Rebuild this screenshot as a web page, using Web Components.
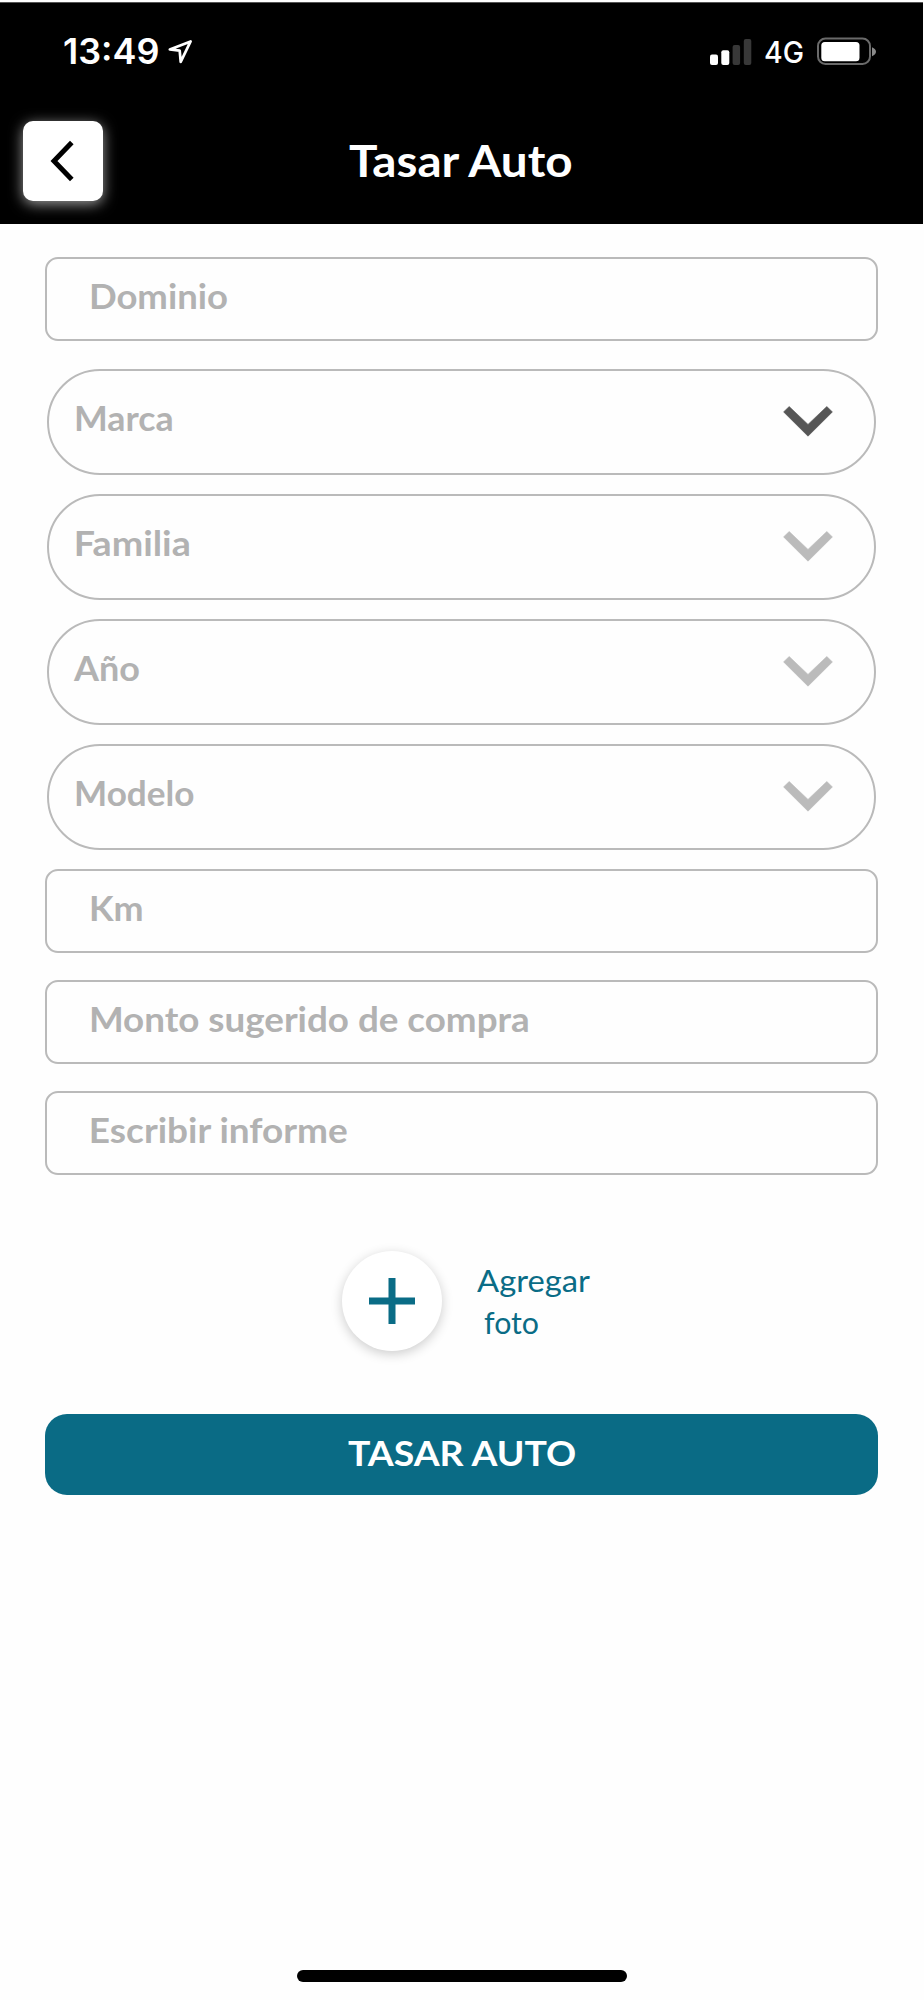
<!DOCTYPE html>
<html lang="es">
<head>
<meta charset="utf-8">
<title>Tasar Auto</title>
<style>
html,body{margin:0;background:#fefefe}
body{width:924px;height:2000px;overflow:hidden;font-family:Lato,"Open Sans",sans-serif}
</style>
</head>
<body>
<valuation-screen></valuation-screen>
<script>
const define = (name, html, setup) => customElements.define(name, class extends HTMLElement {
  connectedCallback() {
    if (this.shadowRoot) return;
    const t = document.createElement('template');
    t.innerHTML = html;
    this.attachShadow({mode: 'open'}).append(t.content.cloneNode(true));
    if (setup) setup(this, this.shadowRoot);
  }
});

/* One line of text, widened so that its glyphs span `span` pixels. */
const pen = document.createElement('canvas').getContext('2d');
define('fitted-text', `<style>
  :host{display:block;white-space:pre;flex:none;transform-origin:0 0}
</style><slot></slot>`, el => {
  const cs = getComputedStyle(el), text = el.textContent;
  const span = Number(el.getAttribute('span'));
  pen.font = `${cs.fontWeight} ${cs.fontSize} ${cs.fontFamily}`;
  const m = pen.measureText(text);
  const ink = m.actualBoundingBoxLeft + m.actualBoundingBoxRight;
  el.style.transform = `scaleX(${span / ink})`;
  el.style.textIndent = m.actualBoundingBoxLeft + 'px';
  el.style.width = span + 'px';
});

define('status-bar', `<style>
  :host{display:flex;height:78px;color:#fff;font-family:Inter,sans-serif;align-items:flex-start}
  .time{font-size:35px;font-weight:600;line-height:42px;margin:27px 10px 0 63.5px}
  .net{font-size:29.5px;font-weight:500;line-height:36px;margin:31px 14px 0 12.5px}
  svg{display:block;flex:none}
  .arrow{margin-top:34px}
  .bars{margin:34px 0 0 auto}
  .bat{margin:32px 46.5px 0 0}
</style>
<fitted-text class="time" span="94">13:49</fitted-text>
<svg class="arrow" width="28" height="28" viewBox="0 0 28 28"><path d="M1.8 12.4 22.6 4.4 12.7 24.8 11.7 13.7Z" fill="none" stroke="#fff" stroke-width="2.7" stroke-linejoin="round"/></svg>
<svg class="bars" width="42" height="30" viewBox="0 0 42 30"><g fill="#fff"><rect x="0" y="17.5" width="8" height="10.5" rx="2"/><rect x="11.3" y="13.3" width="8" height="14.7" rx="2"/></g><g fill="#383838"><rect x="22.6" y="8" width="7.5" height="20" rx="2"/><rect x="33.8" y="2" width="7.5" height="26" rx="2"/></g></svg>
<fitted-text class="net" span="38">4G</fitted-text>
<svg class="bat" width="60" height="32" viewBox="0 0 60 32"><rect x="1" y="3.5" width="52" height="25.5" rx="7.5" fill="none" stroke="#6a6a6a" stroke-width="2"/><rect x="4.3" y="7" width="38.2" height="19.2" rx="3.5" fill="#fff"/><path d="M55 12.2Q59 13.8 59 16.7T55 21.2Z" fill="#8a8a8a"/></svg>`);

define('back-button', `<style>
  :host{display:block;width:80px;height:80px;border-radius:10px;background:#fff;box-shadow:0 3px 14px rgba(255,255,255,.62)}
  svg{display:block}
</style><svg width="80" height="80" viewBox="0 0 80 80"><path d="M48.8 21.5 31 40 48.8 58.5" fill="none" stroke="#000" stroke-width="5"/></svg>`);

define('app-header', `<style>
  :host{display:block;margin-top:2px;width:923px;height:221.5px;background:#000;color:#fff;box-sizing:border-box;border-top:1px solid #555}
  .bar{display:grid;grid-template-columns:81px 1fr;padding:40px 0 0 22.5px}
  .title{font-size:43.5px;font-weight:700;line-height:52px;margin:13px 0 0 245.5px}
</style><status-bar></status-bar>
<div class="bar"><back-button></back-button><fitted-text class="title" span="225">Tasar Auto</fitted-text></div>`);

define('text-field', `<style>
  :host{display:block;box-sizing:border-box;height:84px;margin-left:45px;width:833px;border:2px solid #bababa;border-radius:13px;color:#b2b2b2;font-size:34.7px;font-weight:700;line-height:42px;padding:16px 0 0 43.5px}
</style><slot></slot>`);

define('select-field', `<style>
  :host{display:flex;justify-content:space-between;box-sizing:border-box;height:106px;margin-left:47px;width:829px;border:2px solid #bababa;border-radius:53px;color:#b2b2b2;font-size:34.7px;font-weight:700;line-height:42px;padding:26px 41px 0 26.5px;--mark:#bbb}
  :host([active]){--mark:#565656}
  svg{display:block;margin-top:8.7px}
  path{fill:var(--mark);stroke:var(--mark);stroke-width:.6}
</style><slot></slot><svg width="50" height="31" viewBox="0 0 50 31"><path d="M.6 5.9 6.2.5 25 18.4 43.8.5 49.4 5.9 25 30.2Z"/></svg>`);

define('photo-adder', `<style>
  :host{display:flex;margin:75.5px 0 0 342px;height:101px;color:#0a6c86}
  .disc{width:100px;height:100px;border-radius:50%;background:#fff;box-shadow:0 3px 12px rgba(0,0,0,.2);display:grid;place-items:center}
  svg{display:block}
  .text{margin:8px 0 0 34.5px;font-size:30px;line-height:42.3px}
  .second{margin-left:7px}
</style><div class="disc"><svg width="46" height="46" viewBox="0 0 46 46"><path d="M23 0V46M0 23H46" stroke="#0a6c86" stroke-width="7"/></svg></div>
<div class="text"><fitted-text span="113">Agregar</fitted-text><fitted-text class="second" span="54">foto</fitted-text></div>`);

define('submit-button', `<style>
  :host{display:flex;justify-content:center;box-sizing:border-box;margin:62px 0 0 45px;width:833px;height:81px;border-radius:22px;background:#0a6b85;color:#fff;font-size:35px;font-weight:700;line-height:42px;padding-top:17.5px}
</style><slot></slot>`);

define('home-indicator', `<style>
  :host{display:block;width:330px;height:12px;border-radius:6px;background:#000;margin:auto 0 18px 297px}
</style>`);

define('valuation-screen', `<style>
  :host{display:flex;flex-direction:column;height:2000px;overflow:hidden}
  form{display:flex;flex-direction:column;padding-top:33.7px}
  .pills{display:flex;flex-direction:column;gap:19px;margin:28px 0 18.6px}
  .inputs{display:flex;flex-direction:column;gap:27.3px}
  .pills fitted-text[span="66"]{margin-left:-2.5px}
</style>
<app-header></app-header>
<form>
  <text-field><fitted-text span="136">Dominio</fitted-text></text-field>
  <div class="pills">
    <select-field active><fitted-text span="96">Marca</fitted-text></select-field>
    <select-field><fitted-text span="113">Familia</fitted-text></select-field>
    <select-field><fitted-text span="66">Año</fitted-text></select-field>
    <select-field><fitted-text span="117.5">Modelo</fitted-text></select-field>
  </div>
  <div class="inputs">
    <text-field><fitted-text span="51.5">Km</fitted-text></text-field>
    <text-field><fitted-text span="437">Monto sugerido de compra</fitted-text></text-field>
    <text-field><fitted-text span="257">Escribir informe</fitted-text></text-field>
  </div>
  <photo-adder></photo-adder>
  <submit-button><fitted-text span="228">TASAR AUTO</fitted-text></submit-button>
</form>
<home-indicator></home-indicator>`);
</script>
</body>
</html>
